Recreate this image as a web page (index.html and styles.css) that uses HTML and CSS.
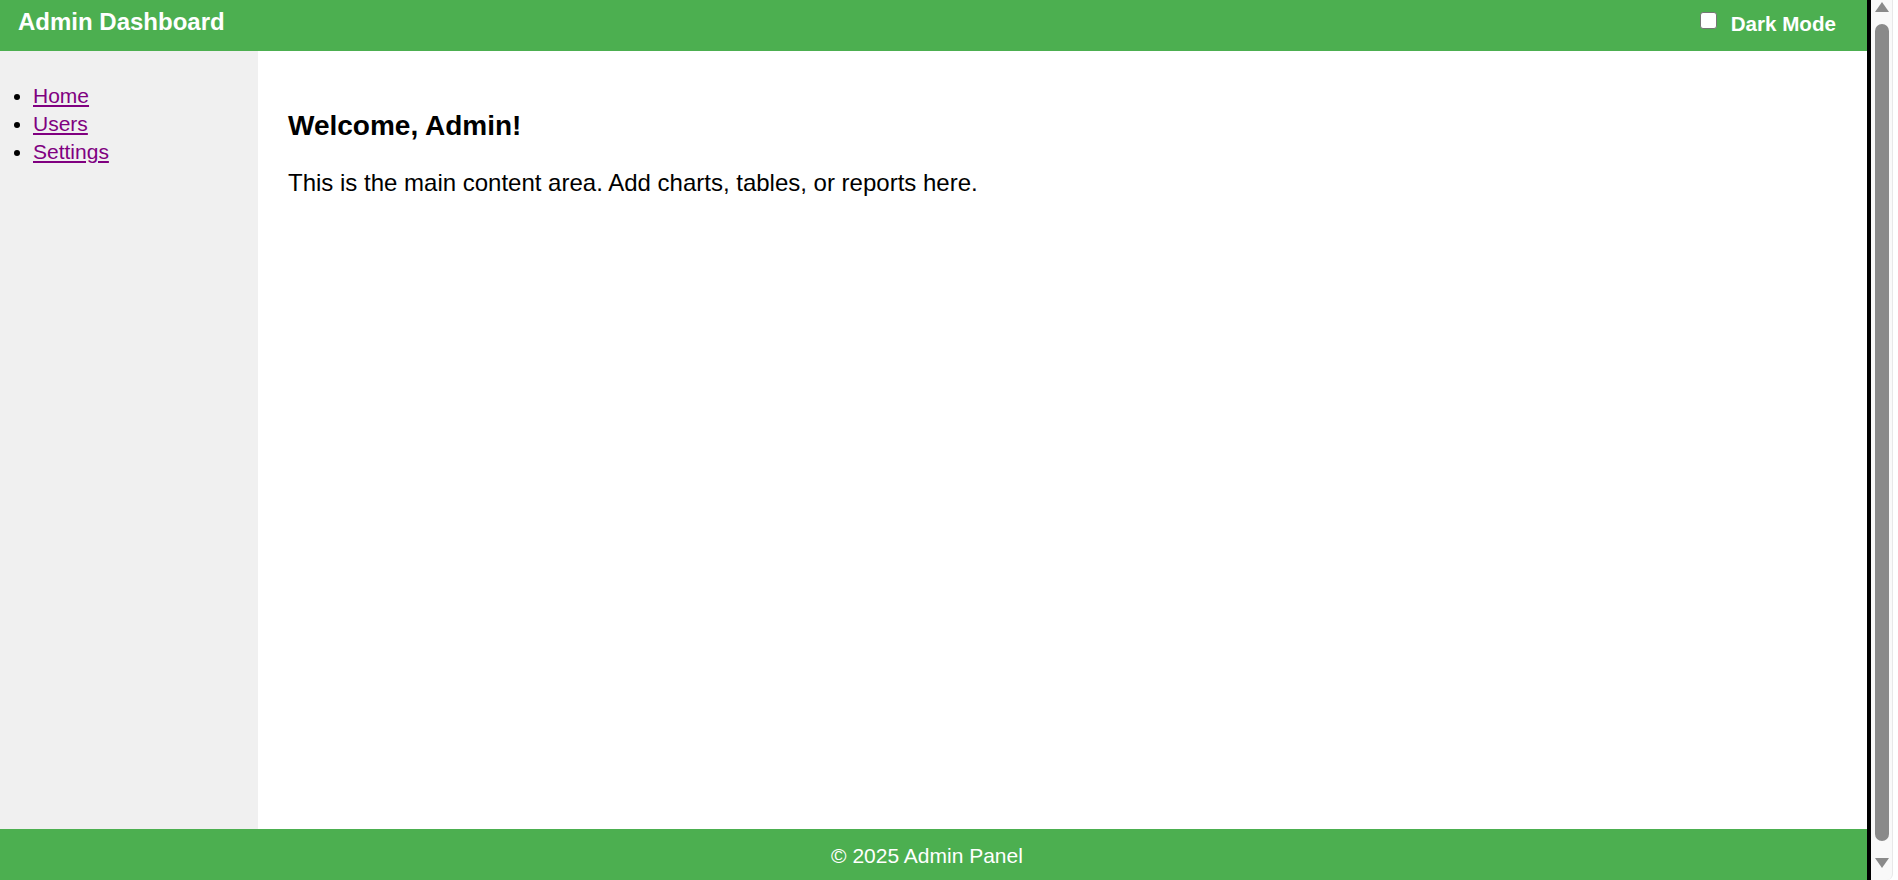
FILE: index.html
```html
<!DOCTYPE html>
<html lang="en">
<head>
<meta charset="utf-8">
<title>Admin Dashboard</title>
<link rel="stylesheet" href="styles.css">
</head>
<body>
<div class="window">
  <div class="app">
    <header class="topbar">
      <h1 class="brand">Admin Dashboard</h1>
      <label class="toggle">
        <input type="checkbox" class="toggle-box">
        <span class="toggle-text">Dark Mode</span>
      </label>
    </header>
    <div class="body-row">
      <nav class="sidebar">
        <ul class="nav-list">
          <li><a class="nav-link" href="#">Home</a></li>
          <li><a class="nav-link" href="#">Users</a></li>
          <li><a class="nav-link" href="#">Settings</a></li>
        </ul>
      </nav>
      <main class="content">
        <h2 class="title">Welcome, Admin!</h2>
        <p class="lead">This is the main content area. Add charts, tables, or reports here.</p>
      </main>
    </div>
    <footer class="footer">© 2025 Admin Panel</footer>
  </div>
  <div class="frame-edge"></div>
  <div class="scrollbar">
    <div class="sb-track">
      <div class="sb-arrow sb-up"></div>
      <div class="sb-thumb"></div>
      <div class="sb-arrow sb-down"></div>
    </div>
  </div>
</div>
</body>
</html>
```
FILE: styles.css
```css
* { box-sizing: border-box; }
html, body {
  margin: 0;
  padding: 0;
  height: 100%;
}
body {
  font-family: "Liberation Sans", Arial, sans-serif;
  color: #000;
  background: #fff;
  overflow: hidden;
}
.window {
  display: flex;
  height: 880px;
  width: 1898px;
}
.app {
  flex: 0 0 1867px;
  display: flex;
  flex-direction: column;
  height: 100%;
}
.topbar {
  flex: 0 0 51px;
  background: #4caf50;
  color: #fff;
  display: flex;
  justify-content: space-between;
  align-items: flex-start;
  padding: 0 31px 0 18px;
}
.brand {
  margin: 8px 0 0;
  font-size: 24px;
  line-height: 28px;
  font-weight: bold;
}
.toggle {
  display: flex;
  align-items: flex-start;
  margin-top: 12px;
  font-weight: bold;
  font-size: 20.6px;
  line-height: 24px;
}
.toggle-box {
  appearance: none;
  -webkit-appearance: none;
  width: 17px;
  height: 17px;
  margin: 0 14px 0 0;
  background: #fff;
  border: 1px solid #767676;
  border-radius: 3px;
}
.body-row {
  flex: 1;
  display: flex;
  min-height: 0;
}
.sidebar {
  flex: 0 0 258px;
  background: #f0f0f0;
}
.nav-list {
  margin: 0;
  padding: 31px 0 0 33px;
  font-size: 21px;
  line-height: 28px;
}
.nav-link {
  color: #800080;
  text-decoration: underline;
}
.content {
  flex: 1;
  padding: 59px 30px 0;
}
.title {
  margin: 0;
  font-size: 28px;
  line-height: 32px;
  font-weight: bold;
}
.lead {
  margin: 27px 0 0;
  font-size: 24px;
  line-height: 28px;
}
.footer {
  flex: 0 0 51px;
  background: #4caf50;
  color: #fff;
  text-align: center;
  font-size: 21px;
  line-height: 48px;
  padding: 3px 13px 0 0;
}
.frame-edge {
  flex: 0 0 4px;
  background: #000;
}
.scrollbar {
  flex: 1;
  background: #fff;
  display: flex;
}
.sb-track {
  width: 22px;
  height: 100%;
  background: #f9f9f9;
  border-right: 1px solid #e8e8e8;
  border-bottom-right-radius: 6px;
  display: flex;
  flex-direction: column;
  align-items: center;
  padding: 2px 0 12px;
}
.sb-arrow {
  width: 0;
  height: 0;
  border-left: 7px solid transparent;
  border-right: 7px solid transparent;
}
.sb-up {
  border-bottom: 10px solid #8a8a8a;
  margin-bottom: 12px;
}
.sb-down {
  border-top: 10px solid #8a8a8a;
  margin-top: 17px;
}
.sb-thumb {
  flex: 1;
  width: 14px;
  background: #8a8a8a;
  border-radius: 7px;
}
```
